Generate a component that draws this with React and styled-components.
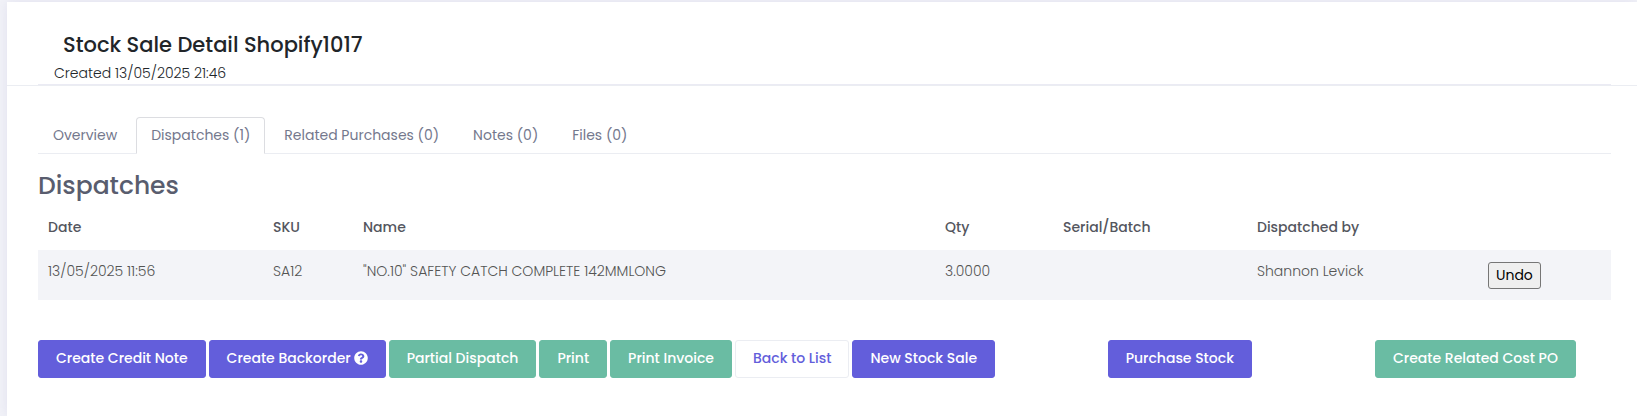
import React, { useState } from 'react';
import styled, { createGlobalStyle } from 'styled-components';
import { FaQuestionCircle } from 'react-icons/fa';

const GlobalStyle = createGlobalStyle`
    * {
        box-sizing: border-box;
    }
    body {
        margin: 0;
        background: #f2f3f8;
        color: #646c9a;
        font-family: Poppins, Inter, "Open Sans", sans-serif;
        font-size: 14px;
        font-weight: 300;
        line-height: 20px;
    }
    button {
        font-family: inherit;
    }
`;

const Page = styled.div`
    padding: 2px 0 0 7px;
`;

const Portlet = styled.main`
    min-height: calc(100vh - 2px);
    background: #fff;
    box-shadow: 0 0 13px 0 rgba(82, 63, 155, 0.1);
`;

const Head = styled.header`
    padding: 0 26px 0 31px;
    border-bottom: 1px solid #ebedf2;
`;

const HeadInner = styled.div`
    padding: 25px 16px 0;
    border-bottom: 1px solid #ebebf4;
`;

const Title = styled.h1`
    margin: 0;
    padding-left: 9px;
    color: #212529;
    font-size: 21px;
    font-weight: 500;
    line-height: 35px;
`;

const Created = styled.p`
    margin: 0;
    color: #212529;
    line-height: 22px;
`;

const Body = styled.div`
    padding: 31px 26px 25px 31px;
`;

const Tabs = styled.nav`
    display: flex;
    gap: 4px;
    border-bottom: 1px solid #ebedf2;
`;

const Tab = styled.button`
    height: 37px;
    margin-bottom: -1px;
    padding: 0 14px;
    border: 1px solid transparent;
    border-radius: 4px 4px 0 0;
    background: transparent;
    color: #74788d;
    font-size: 14px;
    font-weight: 400;
    cursor: pointer;
    ${({ $active }) => $active && `
        border-color: #dcdde1;
        border-bottom-color: #fff;
        background: #fff;
    `}
`;

const SectionTitle = styled.h2`
    margin: 13px 0 10px;
    color: #595d6e;
    font-size: 25px;
    font-weight: 500;
    line-height: 38px;
`;

const Table = styled.table`
    width: 100%;
    table-layout: fixed;
    border-collapse: collapse;
    color: #545454;
    line-height: 18px;

    th, td {
        padding: 12px 10px 11px;
        text-align: left;
        vertical-align: top;
    }
    th {
        height: 35px;
        padding: 3px 10px;
        color: #54565e;
        font-weight: 500;
    }
    tbody tr {
        background: #f3f4f8;
    }
`;

const UndoButton = styled.button`
    display: block;
    padding: 2px 7px;
    border: 1px solid #767676;
    border-radius: 3px;
    background: #efefef;
    color: #000;
    font-size: 14px;
    font-weight: 400;
    line-height: 21px;
`;

const Actions = styled.div`
    display: grid;
    grid-template-columns: 68% 17% 15%;
    margin-top: 40px;
`;

const ButtonGroup = styled.div`
    display: flex;
    gap: 3px;
`;

const colors = {
    brand: { bg: '#635edb', border: '#635edb', text: '#fff' },
    success: { bg: '#6abca3', border: '#6abca3', text: '#fff' },
    secondary: { bg: '#fff', border: '#ebedf2', text: '#635edb' },
};

const Button = styled.button`
    display: inline-flex;
    align-items: center;
    gap: 3px;
    height: 38px;
    padding: 0 17px 2px;
    border: 1px solid ${({ $kind }) => colors[$kind].border};
    border-radius: 3px;
    background: ${({ $kind }) => colors[$kind].bg};
    color: ${({ $kind }) => colors[$kind].text};
    font-size: 14px;
    font-weight: 500;
    white-space: nowrap;
    cursor: pointer;
`;

const tabs = ['Overview', 'Dispatches (1)', 'Related Purchases (0)', 'Notes (0)', 'Files (0)'];

const columns = [
    { text: 'Date', width: 225 },
    { text: 'SKU', width: 90 },
    { text: 'Name', width: 582 },
    { text: 'Qty', width: 118 },
    { text: 'Serial/Batch', width: 194 },
    { text: 'Dispatched by', width: 231 },
    { text: '', width: 133 },
];

const dispatches = [
    {
        id: 1,
        date: '13/05/2025 11:56',
        sku: 'SA12',
        name: '"NO.10" SAFETY CATCH COMPLETE 142MMLONG',
        qty: '3.0000',
        serial: '',
        user: 'Shannon Levick',
    },
];

const actions = [
    { text: 'Create Credit Note', kind: 'brand' },
    { text: 'Create Backorder', kind: 'brand', help: true },
    { text: 'Partial Dispatch', kind: 'success' },
    { text: 'Print', kind: 'success' },
    { text: 'Print Invoice', kind: 'success' },
    { text: 'Back to List', kind: 'secondary' },
    { text: 'New Stock Sale', kind: 'brand' },
];

const DispatchTable = ({ rows = [] }) => (
    <Table>
        <colgroup>
            {columns.map((el, i) => <col key={i} width={el.width} />)}
        </colgroup>
        <thead>
            <tr>
                {columns.map((el, i) => <th key={i}>{el.text}</th>)}
            </tr>
        </thead>
        <tbody>
            {rows.map(el => (
                <tr key={el.id}>
                    <td>{el.date}</td>
                    <td>{el.sku}</td>
                    <td>{el.name}</td>
                    <td>{el.qty}</td>
                    <td>{el.serial}</td>
                    <td>{el.user}</td>
                    <td><UndoButton type="button">Undo</UndoButton></td>
                </tr>
            ))}
        </tbody>
    </Table>
)

const App = () => {
    const [activeTab, setActiveTab] = useState(1);

    return (
        <Page>
            <GlobalStyle />
            <Portlet>
                <Head>
                    <HeadInner>
                        <Title>Stock Sale Detail Shopify1017</Title>
                        <Created>Created 13/05/2025 21:46</Created>
                    </HeadInner>
                </Head>
                <Body>
                    <Tabs role="tablist">
                        {tabs.map((el, i) => (
                            <Tab
                                key={el}
                                type="button"
                                role="tab"
                                aria-selected={i === activeTab}
                                $active={i === activeTab}
                                onClick={() => setActiveTab(i)}
                            >
                                {el}
                            </Tab>
                        ))}
                    </Tabs>
                    <SectionTitle>Dispatches</SectionTitle>
                    <DispatchTable rows={dispatches} />
                    <Actions>
                        <ButtonGroup>
                            {actions.map(el => (
                                <Button key={el.text} type="button" $kind={el.kind}>
                                    {el.text}
                                    {el.help && <FaQuestionCircle size={14} />}
                                </Button>
                            ))}
                        </ButtonGroup>
                        <div>
                            <Button type="button" $kind="brand">Purchase Stock</Button>
                        </div>
                        <div>
                            <Button type="button" $kind="success">Create Related Cost PO</Button>
                        </div>
                    </Actions>
                </Body>
            </Portlet>
        </Page>
    )
}


export default App;
